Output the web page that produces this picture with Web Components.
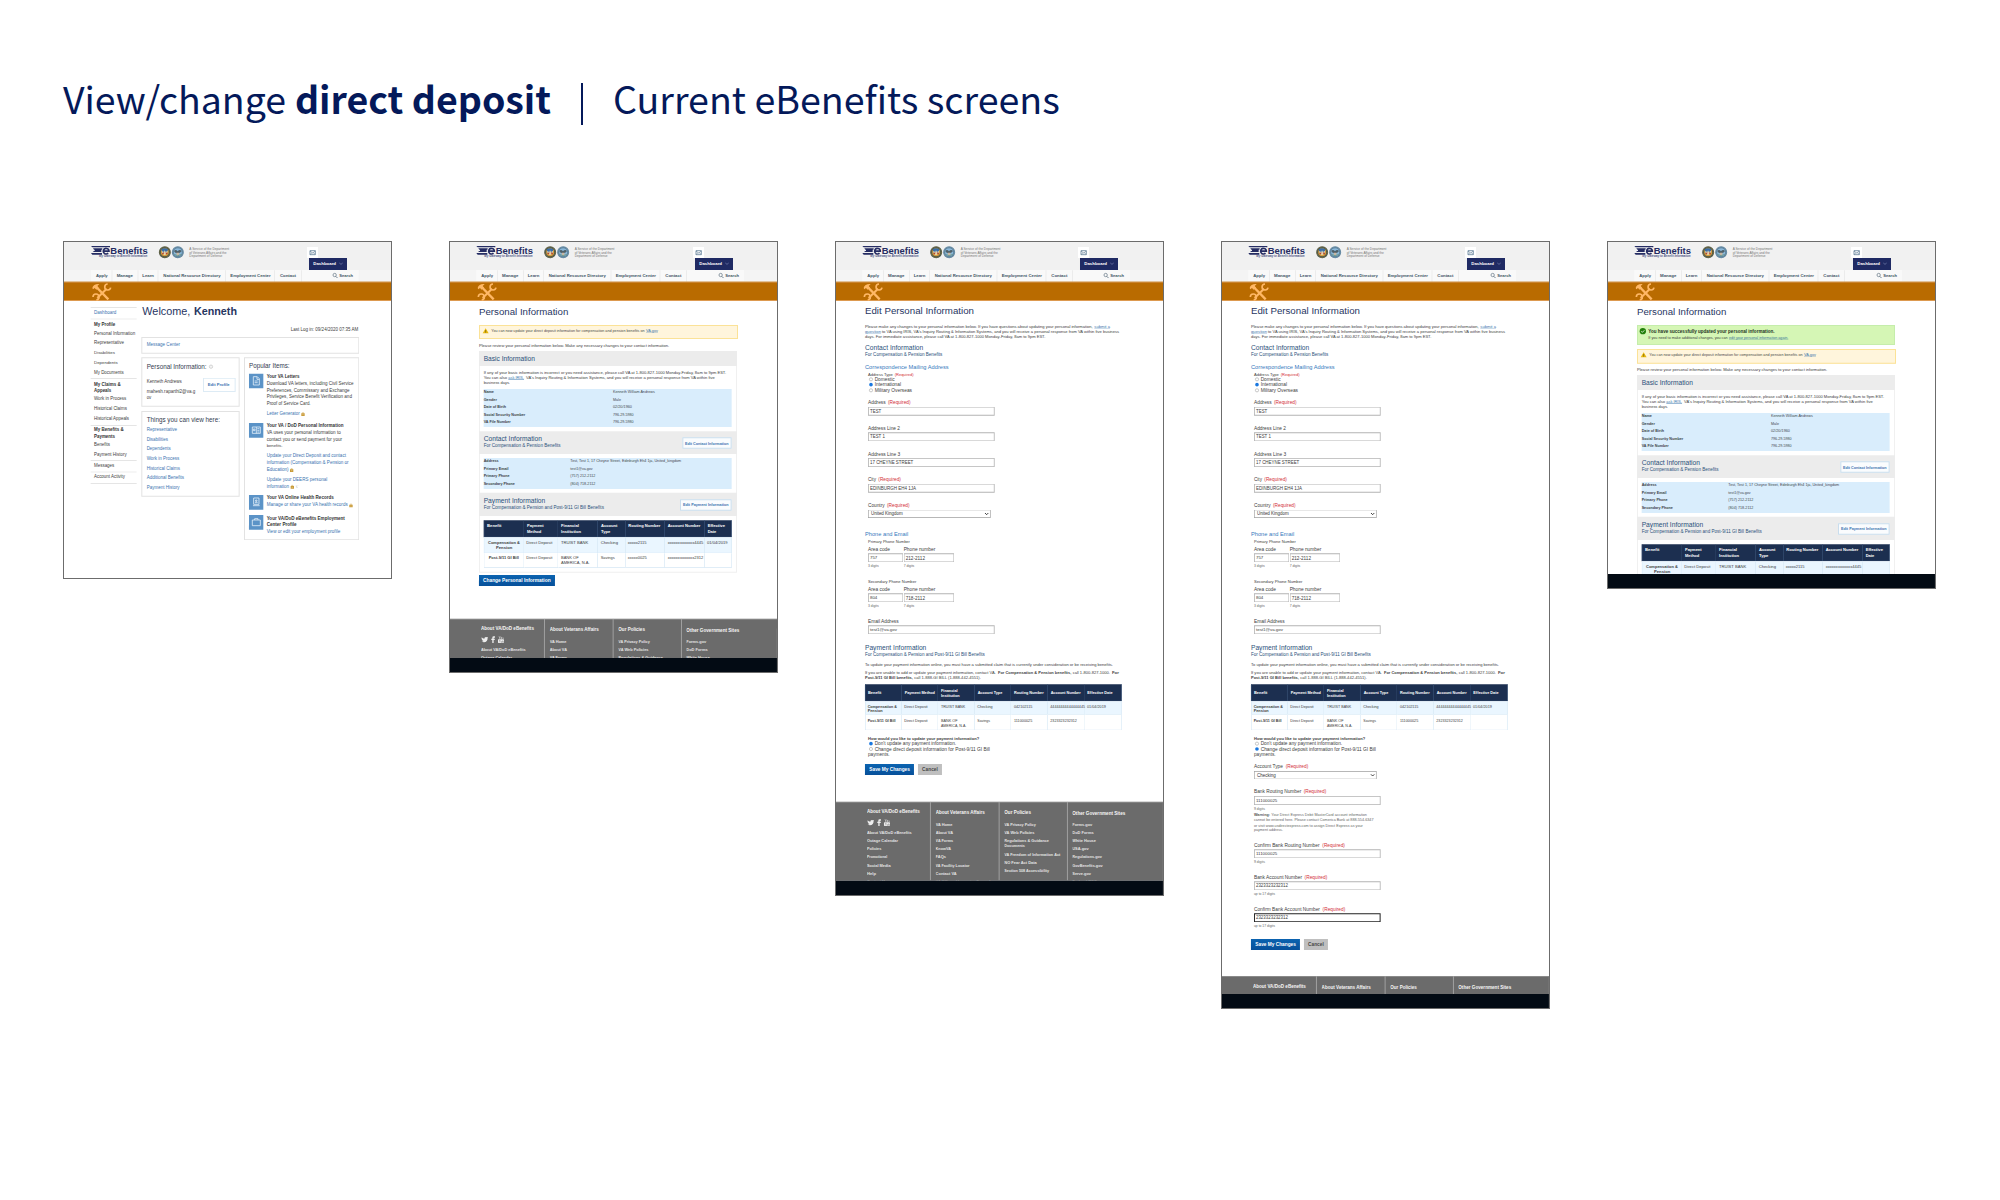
<!DOCTYPE html>
<html lang="en">
<head>
<meta charset="utf-8">
<title>View/change direct deposit</title>
<style>
html,body{margin:0;background:#fff}
body{font-family:"Liberation Sans",Arial,sans-serif;width:2000px;height:1200px;overflow:hidden}
</style>
</head>
<body>
<eb-deck></eb-deck>
<script>
/* ---- layout helpers: nodes carry board coordinates and become nested flex flow ---- */
const esc = s => s.replace(/&/g,'&amp;').replace(/</g,'&lt;');
const T = (x,yc,w,text,o={}) => ({k:'t',x,y:yc-8,w,h:16,text,o});
const B = (x,y,x2,y2,css,kids=[]) => ({k:'b',x,y,w:x2-x,h:y2-y,css,kids});
const S = (x,y,w,h,svg,vb) => ({k:'s',x,y,w,h,svg,vb:vb||`0 0 ${w} ${h}`});
const R = (...kids) => {
  const y=Math.min(...kids.map(k=>k.y)), b=Math.max(...kids.map(k=>k.y+k.h)), l=kids[kids.length-1];
  return {k:'r',x:kids[0].x,y,w:l.x+l.w-kids[0].x,h:b-y,kids};
};
function html(n,dx,dy){
  const p=`margin:${dy}px 0 0 ${dx}px;width:${n.w}px;height:${n.h}px;`;
  if(n.k==='t'){
    const o=n.o, c=(o.c?`color:${o.c};`:'')+(o.b?'font-weight:bold;':'')+(o.i?'font-style:italic;':'')+(o.u?'text-decoration:underline;':'');
    return `<eb-text style="${p}${c}" w="${n.w}"${o.s?` s="${o.s}"`:''}>${esc(n.text)}</eb-text>`;
  }
  if(n.k==='s') return `<svg style="${p}flex:none;display:block;overflow:visible" viewBox="${n.vb}">${n.svg}</svg>`;
  if(n.k==='b') return `<div class="c" style="${p}${n.css}">${stack(n.kids,n.x,n.y)}</div>`;
  let cx=n.x;
  return `<div class="r" style="${p}">${n.kids.map(k=>{const h=html(k,k.x-cx,k.y-n.y);cx=k.x+k.w;return h}).join('')}</div>`;
}
function stack(kids,x0,y0){let cy=y0;return kids.map(k=>{const h=html(k,k.x-x0,k.y-cy);cy=k.y+k.h;return h}).join('')}
const CSS=`<style>:host{display:block;flex:none}.c{display:flex;flex-direction:column;align-items:flex-start;box-sizing:border-box;flex:none}.r{display:flex;align-items:flex-start;flex:none}</style>`;
const mount=(el,kids,y0,y1,css='')=>{
  const r=el.attachShadow({mode:'open'});
  r.innerHTML=CSS+html(B(12,y0,993,y1,css,kids),0,0);
};

/* ---- text that takes its size from the width it should fill ---- */
const ctx=document.createElement('canvas').getContext('2d');
customElements.define('eb-text',class extends HTMLElement{
  connectedCallback(){
    if(this.shadowRoot) return;
    const bold=/bold/.test(this.style.fontWeight), it=/italic/.test(this.style.fontStyle);
    const fam=this.getAttribute('font')||'"Liberation Sans", Arial, sans-serif';
    ctx.font=`${it?'italic ':''}${bold?'bold ':''}100px ${fam}`;
    const w=+this.getAttribute('w'), m=ctx.measureText(this.textContent).width;
    const fixed=this.getAttribute('s');
    const s=fixed?+fixed:w/m*100;
    const ls=fixed?(w-m*s/100)/this.textContent.length:0;
    this.attachShadow({mode:'open'}).innerHTML=
      `<style>:host{display:block;flex:none;white-space:pre;font-family:${fam};font-size:${s.toFixed(3)}px;letter-spacing:${ls.toFixed(3)}px;line-height:${this.getAttribute('lh')||16}px}</style><slot></slot>`;
  }
});

/* ---- site header ---- */
const seal=(a,b,c)=>`<circle cx="18.5" cy="18.5" r="18" fill="${a}"/><circle cx="18.5" cy="18.5" r="15.5" fill="none" stroke="${b}" stroke-width="1.5" stroke-dasharray="2 1.6"/><circle cx="18.5" cy="18.5" r="12" fill="${b}"/>${c}`;
const vaSeal=seal('#46554a','#d49a3c','<path d="M8 10q10-7 20 0l-3 11H11z" fill="#3a6ea8"/><path d="M9 15l7 3 2-5 3 5 7-4-4 9-6 5-6-5z" fill="#e6d7b0"/><path d="M11 24l5-4M26 24l-5-4" stroke="#a8342c" stroke-width="3"/>');
const dodSeal=seal('#5d7f96','#88b7da','<path d="M7 15q5-6 11 1 6-7 12-1-4 6-9 7l-3 5-3-5q-6-1-8-7z" fill="#4f6068"/><path d="M14 20h9l-1 6-4 3-3-3z" fill="#c9b6a2"/><path d="M8 25q10 9 21 0" stroke="#5f8b6a" stroke-width="2" fill="none"/>');
const tools='<g stroke="#ffb866" fill="none"><path d="M14 14L50 51" stroke-width="7"/><path d="M17 47L45 19" stroke-width="6"/><path d="M2 17C4 8 12 4 23 5L17 11 21 16 14 22 9 17 4 21z" fill="#ffb866" stroke="none"/><path d="M48 5A9 9 0 1 0 57 16" stroke-width="5"/><path d="M4 44A9 9 0 1 1 14 53" stroke-width="5"/></g>';
customElements.define('eb-header',class extends HTMLElement{
  connectedCallback(){
    if(this.shadowRoot) return;
    const d=+this.getAttribute('shift')||0, m=+this.getAttribute('menu')||0;
    const navy='#252c63', nv={b:1,c:'#405464'};
    const nav=[[106,35,'Apply'],[168,49,'Manage'],[245,35,'Learn'],[308,172,'National Resource Directory'],[509,121,'Employment Center'],[658,48,'Contact']];
    const rules=[153,231,291,494,641,721];
    const row=[];
    nav.forEach((n,i)=>{row.push(T(n[0]+d,114,n[1],n[2],nv));row.push(B(rules[i]+d,97,rules[i]+d+2,131,'background:#e6e6e6'))});
    row.push(S(818+m,105,15,16,'<circle cx="6" cy="6" r="5" fill="none" stroke="#4d6272" stroke-width="1.8"/><path d="M9.5 10l5 5" stroke="#4d6272" stroke-width="2.4"/>'));
    row.push(T(838+m,114,41,'Search',{b:1,c:'#405464'}));
    mount(this,[
      B(12,12,993,96,'background:#f1f1f1',[
        R(S(91+d,24,58,27,`<g fill="${navy}"><path d="M0 0h57v4H4zM6 7h28v4H9zM11 11h20v6H11zM9 15h22v3H5zM0 21h33v5H4z"/></g><path d="M36.500 15.500H54A8.500 8.500 0 1 0 51.500 21.500" fill="none" stroke="#f1f1f1" stroke-width="8"/><path d="M37 15.500H54A8.500 8.500 0 1 0 51.500 21.500" fill="none" stroke="${navy}" stroke-width="5"/>`),
          B(149+d,22,261+d,54,'',[T(149+d,39,112,'Benefits',{b:1,c:navy})]),
          S(294+d,24,37,37,vaSeal), S(333+d,24,37,37,dodSeal),
          B(386+d,22,506+d,64,'',[T(386+d,32,120,'A Service of the Department',{c:'#757575'}),T(386+d,44,112,'of Veterans Affairs and the',{c:'#757575'}),T(386+d,55,99,'Department of Defense',{c:'#757575'})]),
          B(741+m,27,774+m,60,'background:#fff',[S(749+m,37,18,14,'<rect x="1" y="1" width="16" height="12" fill="none" stroke="#54748f" stroke-width="2.2"/><path d="M1 2l8 6 8-6M2 12l5-5M16 12l-5-5" fill="none" stroke="#54748f" stroke-width="1.8"/>')])),
        T(115+d,55,145,'My Gateway to Benefit Information',{b:1,i:1,c:'#4b5183'}),
        B(747+m,60,861+m,96,'background:#1f2a63',[R(T(760+m,77,68,'Dashboard',{b:1,c:'#fff'}),S(837+m,74,12,7,'<path d="M1 1l5 4 5-4" stroke="#9aa2cc" stroke-width="1.5" fill="none"/>'))])
      ]),
      B(12,96,993,131,'background:#f4f4f4',[B(91+d,96,894+d,131,'background:#f9f9f9',[R(...row)])]),
      B(12,131,993,189,'background:#b96b00;border-top:3px solid #cf8a3c;border-bottom:3px solid #dd9a50',[S(93+d,130,59,56,tools,'0 0 59 56')])
    ],12,189);
  }
});

/* ---- site footer, cut off by the dark browser bar ---- */
customElements.define('eb-footer',class extends HTMLElement{
  connectedCallback(){
    if(this.shadowRoot) return;
    const vis=+this.getAttribute('visible'), bar=+this.getAttribute('bar'), y=845, h={b:1,c:'#f6f6f6'}, l={b:1,c:'#e4e4e4'};
    const list=(x,x2,ys,a)=>{
      const kept=a.map((t,i)=>t.k?t:T(x,ys[i],t[0],t[1],i?l:h)).filter(n=>n.y+2<y+vis);
      return B(x,y,x2,y+vis,'overflow:hidden',kept);
    };
    const sep=x=>B(x,y,x+3,y+vis,'background:#a0a0a0');
    const icons=S(107,898,68,20,'<g fill="#eee"><path d="M0 15q4 1 6-1-4 0-4-3-3-2-2-8 3 4 8 4 0-5 5-5l3 1 3-1-1 3q0 12-11 13-4 0-7-3z"/><path d="M32 20v-9h-3V7h3V4q0-4 4-4h4v4h-3q-1 0-1 2v1h4l-1 4h-3v9z"/><rect x="49" y="9" width="18" height="11" rx="2"/></g><path d="M52 0l2 4 2-4M54 4v4M58 3v4h2V3zM64 3v4h2" stroke="#eee" fill="none" stroke-width="1.5"/><path d="M52 12h5M54 12v6M58 14v4h3v-4M63 12v6h2v-4" stroke="#6b6b6b" fill="none"/>');
    const kids=[];
    if(vis) kids.push(B(12,y,993,y+vis,'background:#6b6b6b;overflow:hidden;box-shadow:inset 0 3px 0 #8a8a8a',[R(
      list(105,285,[876,0,939,963,987,1012,1037,1061,1084],[[159,'About VA/DoD eBenefits'],icons,[134,'About VA/DoD eBenefits'],[93,'Outage Calendar'],[43,'Policies'],[61,'Promotional'],[71,'Social Media'],[27,'Help'],[60,'Contact Us']]),
      sep(294),
      list(311,496,[879,913,938,962,987,1011,1036,1060,1084],[[148,'About Veterans Affairs'],[51,'VA Home'],[52,'About VA'],[53,'VA Forms'],[46,'KnowVA'],[31,'FAQs'],[102,'VA Facility Locator'],[63,'Contact VA'],[165,'VA Office of Inspector General']]),
      sep(500),
      list(517,700,[879,913,938,962,978,1003,1027,1052],[[80,'Our Policies'],[95,'VA Privacy Policy'],[91,'VA Web Policies'],[134,'Regulations & Guidance'],[62,'Documents'],[169,'VA Freedom of Information Act'],[98,'NO Fear Act Data'],[135,'Section 508 Accessibility']]),
      sep(705),
      list(721,900,[879,913,938,962,987,1011,1036,1060,1084],[[159,'Other Government Sites'],[60,'Forms.gov'],[64,'DoD Forms'],[71,'White House'],[49,'USA.gov'],[89,'Regulations.gov'],[91,'GovBenefits.gov'],[56,'Serve.gov'],[74,'Federal RSS']])
    )]));
    kids.push(B(12,y+vis,993,y+vis+bar,'background:#030b14'));
    mount(this,kids,y,y+vis+bar);
  }
});

/* ---- welcome dashboard ---- */
const ink='#404040', link='#3a73b0', head='#27355f';
customElements.define('eb-welcome',class extends HTMLElement{
  connectedCallback(){
    if(this.shadowRoot) return;
    const k={c:ink}, b={c:'#333',b:1}, a={c:link};
    const hr=y=>B(92,y-1,230,y+1,'background:#dcdcdc');
    const card='box-shadow:inset 0 0 0 3px #e2e2e2', tile='background:#5b93c7';
    const lock=(x,y)=>S(x,y-5,10,11,'<rect y="3" width="10" height="8" fill="#c99a35"/><path d="M3 3V1h4v2" stroke="#c99a35" fill="none" stroke-width="1.4"/><path d="M3 7h4" stroke="#fff"/>');
    const side=B(92,200,230,740,'',[hr(209),T(102,225,67,'Dashboard',a),hr(243),T(102,261,64,'My Profile',b),
      T(102,286,124,'Personal Information',k),T(102,315,90,'Representative',k),T(102,345,63,'Disabilities',k),T(102,375,71,'Dependents',k),T(102,405,89,'My Documents',k),hr(422),
      T(102,439,80,'My Claims &',b),T(102,458,52,'Appeals',b),T(102,482,97,'Work in Process',k),T(102,512,99,'Historical Claims',k),T(102,541,106,'Historical Appeals',k),hr(562),
      T(102,576,89,'My Benefits &',b),T(102,595,63,'Payments',b),T(102,620,48,'Benefits',k),T(102,650,98,'Payment History',k),hr(668),T(102,683,61,'Messages',k),hr(702),T(102,717,94,'Account Activity',k),hr(736)]);
    const icon=(y,p)=>B(567,y,610,y+44,tile,[S(577,y+8,24,27,`<g fill="none" stroke="#e6f1fb" stroke-width="2.4">${p}</g>`)]);
    const left=B(244,358,539,780,'',[
      B(244,358,539,506,card,[R(T(260,388,180,'Personal Information:',{c:'#333c50'}),S(447,380,12,12,'<circle cx="6" cy="6" r="5" fill="none" stroke="#aaa" stroke-width="1.5"/><path d="M6 3v6" stroke="#bbb"/>')),
        R(B(260,410,420,500,'',[T(260,431,106,'Kenneth Andrews',k),T(260,460,146,'mahesh.raparthi2@va.g',k),T(260,480,14,'ov',k)]),B(429,419,527,462,'box-shadow:inset 0 0 0 3px #ddebf5',[T(443,441,66,'Edit Profile',{c:link,b:1})]))]),
      B(244,519,539,776,card,[T(260,545,220,'Things you can view here:',{c:'#333c50'}),T(260,574,91,'Representative',a),T(260,604,64,'Disabilities',a),T(260,633,72,'Dependents',a),T(260,662,98,'Work in Process',a),T(260,691,100,'Historical Claims',a),T(260,720,112,'Additional Benefits',a),T(260,750,99,'Payment History',a)])]);
    const right=B(552,358,898,907,card,[T(567,385,122,'Popular Items:',{c:'#333c50'}),
      R(icon(407,'<path d="M3 1h12l6 6v19H3zM14 2v7h7M7 14h9M7 19h9"/>'),B(620,405,890,540,'',[T(620,416,99,'Your VA Letters',b),T(620,436,262,'Download VA letters, including Civil Service',k),T(620,457,249,'Preferences, Commissary and Exchange',k),T(620,477,256,'Privileges, Service Benefit Verification and',k),T(620,497,132,'Proof of Service Card.',k),R(T(620,526,99,'Letter Generator',a),lock(724,528))])),
      R(icon(555,'<path d="M0 4h24v19H0zM12 4v19M3 10h5v5H3zM15 9h6M15 14h6M15 19h6"/>'),B(620,550,890,760,'',[T(620,563,231,'Your VA / DoD Personal Information',b),T(620,583,223,'VA uses your personal information to',k),T(620,604,226,'contact you or send payment for your',k),T(620,624,48,'benefits.',k),T(620,653,238,'Update your Direct Deposit and contact',a),T(620,674,246,'information (Compensation & Pension or',a),R(T(620,695,66,'Education)',a),lock(690,696)),T(620,724,182,'Update your DEERS personal',a),R(T(620,745,67,'information',a),lock(692,746),S(708,741,7,8,'<path d="M1 1v6h5M3 4l3-3" stroke="#aaa" fill="none"/>'))])),
      R(icon(771,'<path d="M4 1h16v19H4zM2 24h20M8 15h8M10 7h4v4h-4z"/>'),B(620,771,890,815,'',[T(620,780,202,'Your VA Online Health Records',b),R(T(620,801,244,'Manage or share your VA health records',a),lock(868,802))])),
      R(icon(831,'<path d="M0 7h24v17H0zM7 7V3h10v4"/>'),B(620,831,890,895,'',[T(620,841,235,'Your VA/DoD eBenefits Employment',b),T(620,861,90,'Center Profile',b),T(620,882,221,'View or edit your employment profile',a)]))]);
    mount(this,[R(side,B(244,200,900,910,'',[R(T(247,221,144,'Welcome,',{c:head}),T(402,221,129,'Kenneth',{c:head,b:1})),T(692,274,204,'Last Log in: 09/24/2020 07:35 AM',k),B(244,297,898,347,card,[T(260,321,100,'Message Center',a)]),R(left,right)]))],189,1017,'background:#fff');
  }
});

/* ---- tables ---- */
const table=(edges,rows)=>{
  const x0=edges[0],x1=edges[edges.length-1];
  return B(x0,rows[0].y,x1,rows[rows.length-1].y2,'',rows.map(r=>B(x0,r.y,x1,r.y2,`background:${r.bg}`,[R(...edges.slice(0,-1).map((e,i)=>
    B(e,r.y,edges[i+1],r.y2,`box-shadow:inset -2px 0 0 ${r.line},inset 0 -2px 0 ${r.line}${i?'':',inset 2px 0 0 '+r.line}`,(r.cells[i]||[]).map(c=>T(c[0],c[1],c[2],c[3],{b:r.head||i===0,c:r.head?'#fff':'#3c3c3c'})))))])));
};
const kv=(y,y2,vx,rows)=>B(113,y,857,y2,'background:#d9edfc',rows.map(r=>R(T(113,r[0],r[1],r[2],{b:1,c:'#3c4348'}),T(vx,r[0],r[3],r[4],{c:'#42484d'}))));

/* ---- personal information review page ---- */
customElements.define('eb-review',class extends HTMLElement{
  connectedCallback(){
    if(this.shadowRoot) return;
    const ok=this.hasAttribute('success'), o=ok?72:0, end=+this.getAttribute('end');
    const h2={c:'#2b507a'}, btn='background:#fafcfe;box-shadow:inset 0 0 0 3px #c9dded', k={c:'#3c3c3c'};
    const gray='background:#ececec';
    const kids=[T(99,220,268,'Personal Information',{c:head})];
    if(ok) kids.push(B(99,261,873,321,'background:#d5f6b5;box-shadow:inset 0 0 0 3px #c5edab',[
      R(S(107,270,19,19,'<circle cx="9.5" cy="9.5" r="9.5" fill="#23800c"/><path d="M5 10l3 3 6-6" stroke="#fff" stroke-width="2.4" fill="none"/>'),T(133,280,379,'You have successfully updated your personal information.',{b:1,c:'#24331d'})),
      R(T(133,300,238,'If you need to make additional changes, you can',k),T(375,300,178,'edit your personal information again.',{c:'#39749b',u:1}))]));
    const w=ok?333:261;
    kids.push(B(99,w,876,w+(ok?44:42),'background:#fff5dc;box-shadow:inset 0 0 0 3px #fbe297',[R(
      S(110,w+10,18,16,'<path d="M9 0l9 15H0z" fill="#e8b90c"/><path d="M9 5v6M9 12v2" stroke="#6b5710" stroke-width="2"/>'),
      T(136,w+18,460,'You can now update your direct deposit information for compensation and pension benefits on',{c:'#484848'}),T(600,w+18,36,'VA.gov',{c:'#3b76ad',u:1}))]));
    kids.push(T(99,323+o,571,'Please review your personal information below. Make any necessary changes to your contact information.',k));
    const row=(y,y2,bg,c)=>({y:y+o,y2:y2+o,bg,line:'#d6e8f5',cells:c.map(q=>q.map(t=>[t[0],t[1]+o,t[2],t[3]]))});
    const hd=row(847,898,'#1c2f50',[[[123,863,43,'Benefit']],[[243,863,50,'Payment'],[243,880,43,'Method']],[[345,863,54,'Financial'],[345,880,60,'Institution']],[[465,863,49,'Account'],[465,880,28,'Type']],[[547,863,96,'Routing Number']],[[665,863,98,'Account Number']],[[785,863,52,'Effective'],[785,880,26,'Date']]]);
    hd.head=1;hd.line='#3a5377';
    kids.push(B(99,339+o,873,1004+o,'box-shadow:inset 0 0 0 3px #f0f0f0',[
      B(99,339+o,873,384+o,gray,[T(113,361+o,154,'Basic Information',h2)]),
      T(113,404+o,728,'If any of your basic information is incorrect or you need assistance, please call VA at 1-800-827-1000 Monday-Friday, 8am to 9pm EST.',k),
      R(T(113,419+o,70,'You can also',k),T(187,419+o,47,'ask IRIS,',{c:'#3b76ad',u:1}),T(240,419+o,567,"VA's Inquiry Routing & Information Systems, and you will receive a personal response from VA within five",k)),
      T(113,434+o,79,'business days.',k),
      kv(453+o,567+o,501,[[461+o,31,'Name',126,'Kenneth William Andrews'],[484+o,40,'Gender',24,'Male'],[506+o,67,'Date of Birth',57,'02/20/1960'],[529+o,125,'Social Security Number',62,'796-29-5980'],[552+o,82,'VA File Number',62,'796-29-5980']]),
      B(99,580+o,873,648+o,gray,[R(B(113,580+o,500,648+o,'',[T(113,602+o,175,'Contact Information',h2),T(113,623+o,231,'For Compensation & Pension Benefits',h2)]),B(709,598+o,857,632+o,btn,[T(717,616+o,131,'Edit Contact Information',{b:1,c:link})]))]),
      kv(660+o,753+o,373,[[669+o,45,'Address',333,'Test, Test 1, 17 Cheyne Street, Edinburgh Eh4 1ja, United_kingdom'],[692+o,75,'Primary Email',67,'test1@va.gov'],[714+o,78,'Primary Phone',75,'(757) 212-2112'],[737+o,94,'Secondary Phone',75,'(804) 718-2112']]),
      B(99,764+o,873,834+o,gray,[R(B(113,764+o,600,834+o,'',[T(113,787+o,185,'Payment Information',h2),T(113,808+o,361,'For Compensation & Pension and Post-9/11 GI Bill Benefits',h2)]),B(702,784+o,857,818+o,btn,[T(711,800+o,137,'Edit Payment Information',{b:1,c:link})]))]),
      table([113,235,337,456,539,657,777,857],[hd,
        row(898,946,'#eaf6ff',[[[126,913,96,'Compensation &'],[150,928,49,'Pension']],[[241,913,78,'Direct Deposit']],[[345,913,82,'TRUIST BANK']],[[464,913,52,'Checking']],[[545,913,57,'xxxxx2115']],[[665,913,107,'xxxxxxxxxxxxx4445']],ok?[]:[[783,913,62,'01/04/2019']]]),
        row(946,989,'#fff',[[[128,959,91,'Post-9/11 GI Bill']],[[241,959,78,'Direct Deposit']],[[345,959,53,'BANK OF'],[345,974,86,'AMERICA, N.A.']],[[464,959,42,'Savings']],[[545,959,57,'xxxxx0025']],[[665,959,107,'xxxxxxxxxxxxx2312']],[]])].slice(0,ok?2:3))
    ]));
    if(!ok) kids.push(B(99,1011,327,1044,'background:linear-gradient(#0b63b0,#07509a)',[T(111,1028,203,'Change Personal Information',{b:1,c:'#fff'})]));
    mount(this,kids,189,end,'background:#fff;overflow:hidden');
  }
});

/* ---- edit personal information page ---- */
const field=(y,x,x2,text,w,focus)=>B(x,y,x2,y+27,`background:#fff;box-shadow:inset 0 0 0 ${focus?3:2.5}px ${focus?'#222':'#b4b4b4'}`,[T(x+6,y+14,w,text,{c:'#3c3c3c'})]);
const select=(y,text,w)=>B(108,y,476,y+25,'background:#fff;box-shadow:inset 0 0 0 2px #a0a0a0',[R(T(117,y+13,w,text,{c:'#333'}),S(458,y+9,12,8,'<path d="M1 1l5 5 5-5" stroke="#222" stroke-width="2.6" fill="none"/>'))]);
const label=(y,w,text,rx,rw)=>rx?R(T(108,y,w,text,{c:ink}),T(rx,y,rw||68,'(Required)',{c:'#d3303a'})):T(108,y,w,text,{c:ink});
const radio=(y,on,w,text)=>R(S(111,y-6,12,12,on?'<circle cx="6" cy="6" r="5.5" fill="#1a78e0"/>':'<circle cx="6" cy="6" r="4.8" fill="#fff" stroke="#999" stroke-width="1.6"/>'),T(128,y,w,text,{c:ink}));
customElements.define('eb-edit',class extends HTMLElement{
  connectedCallback(){
    if(this.shadowRoot) return;
    const bank=this.hasAttribute('bank'), end=+this.getAttribute('end'), k={c:'#3c3c3c'}, h2={c:'#2b507a'}, h3={c:'#377abd'}, q={c:'#666'};
    const p=846, P=1476;
    const phone=(y,name,nw,a,b)=>[T(108,y,nw,name,{c:ink}),R(T(108,y+23,66,'Area code',{c:ink}),T(215,y+23,95,'Phone number',{c:ink})),R(field(y+35,108,214,a,22),field(y+35,215,367,b,58)),R(T(108,y+73,32,'3 digits',q),T(215,y+73,32,'7 digits',q))];
    const row=(y,y2,bg,c)=>({y:y+p,y2:y2+p,bg,line:'#d6e8f5',cells:c.map(r=>r.map(t=>[t[0],t[1]+p,t[2],t[3]]))});
    const hd=row(493,544,'#1c2f50',[[[108,519,40,'Benefit']],[[218,519,91,'Payment Method']],[[327,511,50,'Financial'],[327,526,56,'Institution']],[[437,519,74,'Account Type']],[[546,519,89,'Routing Number']],[[656,519,90,'Account Number']],[[766,519,76,'Effective Date']]]);
    hd.head=1;hd.line='#3a5377';
    const kids=[T(99,219,327,'Edit Personal Information',{c:head}),
      R(T(99,267,684,'Please make any changes to your personal information below. If you have questions about updating your personal information,',k),T(787,267,47,'submit a',{c:'#3b76ad',u:1})),
      R(T(99,282,48,'question',{c:'#3b76ad',u:1}),T(150,282,713,"to VA using IRIS, VA's Inquiry Routing & Information Systems, and you will receive a personal response from VA within five business",k)),
      T(99,297,542,'days. For immediate assistance, please call VA at 1-800-827-1000 Monday-Friday, 8am to 9pm EST.',k),
      T(99,329,175,'Contact Information',h2),T(99,351,232,'For Compensation & Pension Benefits',h2),T(99,387,252,'Correspondence Mailing Address',h3),
      label(409,75,'Address Type',188,57),radio(424,0,60,'Domestic'),radio(440,1,79,'International'),radio(457,0,112,'Military Overseas'),
      label(493,53,'Address',168),field(506,108,488,'TEST',34),label(571,96,'Address Line 2'),field(583,108,488,'TEST 1',45),
      label(648,97,'Address Line 3'),field(660,108,488,'17 CHEYNE STREET',130),label(725,24,'City',139),field(737,108,488,'EDINBURGH EH4 1JA',138),
      label(802,50,'Country',165),select(815,'United Kingdom',95),T(99,888,130,'Phone and Email',h3),
      ...phone(65+p,'Primary Phone Number',126,'757','212-2112'),...phone(185+p,'Secondary Phone Number',145,'804','718-2112'),
      label(303+p,93,'Email Address'),field(316+p,108,488,'test1@va.gov',81),
      T(99,383+p,184,'Payment Information',h2),T(99,405+p,360,'For Compensation & Pension and Post-9/11 GI Bill Benefits',h2),
      T(99,434+p,745,'To update your payment information online, you must have a submitted claim that is currently under consideration or be receiving benefits.',k),
      R(T(99,458+p,393,'If you are unable to add or update your payment information, contact VA.',k),T(498,458+p,220,'For Compensation & Pension benefits,',{b:1,c:ink}),T(722,458+p,112,'call 1-800-827-1000.',k),T(840,458+p,21,'For',{b:1,c:ink})),
      R(T(99,472+p,144,'Post-9/11 GI Bill benefits,',{b:1,c:ink}),T(247,472+p,200,'call 1-888-GI BILL (1-888-442-4551).',k)),
      table([99,209,319,428,538,647,760,869],[hd,
        row(544,584,'#eaf6ff',[[[107,559,88,'Compensation &'],[107,573,45,'Pension']],[[217,559,70,'Direct Deposit']],[[327,559,73,'TRUIST BANK']],[[436,559,46,'Checking']],[[546,559,55,'042102115']],[[655,559,104,'44444444444444445']],[[765,559,57,'01/04/2019']]]),
        row(584,631,'#fff',[[[107,602,84,'Post-9/11 GI Bill']],[[217,602,70,'Direct Deposit']],[[327,602,50,'BANK OF'],[327,616,76,'AMERICA, N.A.']],[[436,602,38,'Savings']],[[546,602,55,'111000025']],[[655,602,80,'2323323232312']],[]])]),
      T(108,656+p,334,'How would you like to update your payment information?',{b:1,c:ink}),
      radio(671+p,!bank,245,"Don't update any payment information."),radio(687+p,bank,346,'Change direct deposit information for Post-9/11 GI Bill'),T(108,703+p,65,'payments.',{c:ink})];
    if(bank) kids.push(label(110+P,87,'Account Type',203),select(123+P,'Checking',56),
      label(185+P,142,'Bank Routing Number',257),field(198+P,108,488,'111000025',64),T(108,236+P,33,'9 digits',q),
      R(T(108,255+P,48,'Warning:',{b:1,c:'#555'}),T(160,255+P,287,'Your Direct Express Debit MasterCard account information',q)),
      T(108,270+P,359,'cannot be entered here. Please contact Comerica Bank at 888-554-6347',q),T(108,286+P,327,'or visit www.usdirectexpress.com to assign Direct Express as your',q),T(108,300+P,87,'payment address.',q),
      label(345+P,197,'Confirm Bank Routing Number',313),field(358+P,108,488,'111000025',64),T(108,396+P,33,'9 digits',q),
      label(441+P,145,'Bank Account Number',260),field(454+P,108,488,'2323323232312',96),T(108,492+P,63,'up to 17 digits',q),
      label(538+P,199,'Confirm Bank Account Number',314),field(550+P,108,488,'2323323232312',96,1),T(108,589+P,63,'up to 17 digits',q));
    const by=bank?627+P:732+p;
    kids.push(R(B(99,by,246,by+33,'background:linear-gradient(#0b63b0,#07509a)',[T(112,by+17,122,'Save My Changes',{b:1,c:'#fff'})]),B(258,by,330,by+33,'background:#bfbfbf',[T(270,by+17,48,'Cancel',{b:1,c:'#444',s:14})])));
    mount(this,kids,189,end,'background:#fff;overflow:hidden');
  }
});

/* ---- framed thumbnail of a page; the minute rotation keeps the tiny glyphs unhinted ---- */
customElements.define('eb-screen',class extends HTMLElement{
  connectedCallback(){
    if(this.shadowRoot) return;
    this.attachShadow({mode:'open'}).innerHTML=`<style>:host{display:block;flex:none;box-sizing:border-box;width:329px;height:${this.getAttribute('h')}px;border:1px solid #6c6c6c;overflow:hidden;background:#fff}
    .page{width:981px;display:flex;flex-direction:column;transform:scale(.333333) rotate(.004deg);transform-origin:0 0}</style><div class="page"><slot></slot></div>`;
  }
});
customElements.define('deck-title',class extends HTMLElement{
  connectedCallback(){
    if(this.shadowRoot) return;
    const f=`font='"Noto Sans CJK SC", "Noto Sans", sans-serif' lh="56"`;
    this.attachShadow({mode:'open'}).innerHTML=`<style>:host{display:flex;align-items:center;height:56px;color:#04195a}i{display:block;width:2px;height:42px;margin:11px 30px 0 30px;background:#04195a}</style>
    <eb-text ${f} w="223">View/change</eb-text><eb-text ${f} w="256" style="font-weight:bold;margin-left:9px">direct deposit</eb-text><i></i><eb-text ${f} w="447">Current eBenefits screens</eb-text>`;
  }
});
customElements.define('eb-deck',class extends HTMLElement{
  connectedCallback(){
    if(this.shadowRoot) return;
    this.attachShadow({mode:'open'}).innerHTML=`<style>:host{display:flex;flex-direction:column;gap:115px;padding:70px 63px 0;box-sizing:border-box;height:1200px}.g{display:flex;gap:57px;align-items:flex-start}</style>
    <deck-title></deck-title>
    <div class="g">
      <eb-screen h="338"><eb-header shift="2" menu="0"></eb-header><eb-welcome></eb-welcome></eb-screen>
      <eb-screen h="432"><eb-header></eb-header><eb-review end="1142"></eb-review><eb-footer visible="118" bar="48"></eb-footer></eb-screen>
      <eb-screen h="655"><eb-header menu="-3"></eb-header><eb-edit end="1691"></eb-edit><eb-footer visible="237" bar="48"></eb-footer></eb-screen>
      <eb-screen h="768"><eb-header></eb-header><eb-edit bank end="2214"></eb-edit><eb-footer visible="54" bar="48"></eb-footer></eb-screen>
      <eb-screen h="348"><eb-header></eb-header><eb-review success end="1008"></eb-review><eb-footer visible="0" bar="48"></eb-footer></eb-screen>
    </div>`;
  }
});
</script>
</body>
</html>
